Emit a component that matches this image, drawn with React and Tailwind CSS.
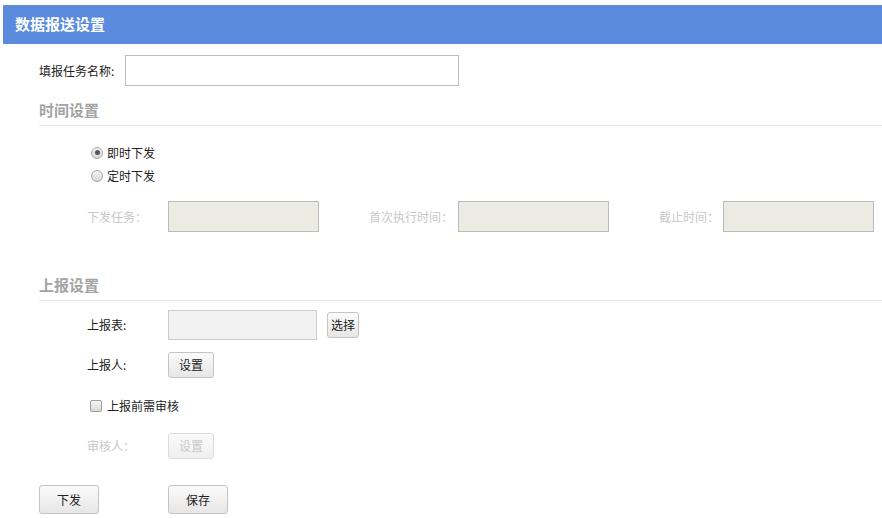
import React from "react"

const font = { fontFamily: '"Noto Sans CJK SC", "Liberation Sans", sans-serif' }

function Btn({ children, className = "", disabled }) {
  return (
    <button
      type="button"
      className={
        "flex items-center justify-center rounded-[3px] border text-[12px] bg-linear-to-b " +
        (disabled
          ? "border-[#dcdcdc] from-[#fafafa] to-[#efefef] text-[#c8c8c8] "
          : "border-[#c4c4c4] from-[#fbfbfb] to-[#e6e6e6] text-[#222] ") +
        className
      }
    >
      {children}
    </button>
  )
}

function Radio({ checked, label }) {
  return (
    <label className="flex h-[23px] items-center gap-[4px] text-[12px] text-[#222]">
      <span className="flex h-[12px] w-[12px] items-center justify-center rounded-full border border-[#a8a8a8] bg-linear-to-b from-[#f4f4f4] to-[#d8d8d8]">
        {checked && <span className="h-[5px] w-[5px] rounded-full bg-[#555]" />}
      </span>
      <span>{label}</span>
    </label>
  )
}

function Section({ title }) {
  return (
    <div className="flex h-[26px] items-start border-b border-[#e8e8e8] text-[15px] font-bold leading-[20px] text-[#a3a3a3]">
      {title}
    </div>
  )
}

export default function App() {
  return (
    <div className="h-[518px] w-[882px] overflow-hidden bg-white pl-[3px] pt-[5px]" style={font}>
      <div className="flex h-[39px] items-center bg-[#5a8bdc] pl-[12px] text-[15px] font-bold text-white">
        数据报送设置
      </div>

      <div className="pl-[36px]">
        <div className="mt-[11px] flex h-[31px] items-center text-[12px] text-[#222]">
          <span className="w-[86px]">填报任务名称:</span>
          <div className="h-[31px] w-[334px] border border-[#bcbcbc] bg-white" />
        </div>

        <div className="mt-[14px]">
          <Section title="时间设置" />
        </div>

        <div className="mt-[15px] pl-[52px]">
          <Radio checked label="即时下发" />
          <Radio label="定时下发" />
        </div>

        <div className="mt-[14px] flex items-center pl-[48px] text-[12px] text-[#c8c8c8]">
          <span className="w-[81px]">下发任务：</span>
          <div className="h-[31px] w-[151px] border border-[#bcbcbc] bg-[#ebebe4]" />
          <span className="ml-[50px] w-[89px]">首次执行时间：</span>
          <div className="h-[31px] w-[151px] border border-[#bcbcbc] bg-[#ebebe4]" />
          <span className="ml-[50px] w-[64px]">截止时间：</span>
          <div className="h-[31px] w-[151px] border border-[#bcbcbc] bg-[#ebebe4]" />
        </div>

        <div className="mt-[43px]">
          <Section title="上报设置" />
        </div>

        <div className="pl-[48px] text-[12px] text-[#222]">
          <div className="mt-[9px] flex items-center">
            <span className="w-[81px]">上报表:</span>
            <div className="h-[30px] w-[149px] border border-[#cccccc] bg-[#f2f2f2]" />
            <Btn className="ml-[10px] h-[26px] w-[32px]">选择</Btn>
          </div>

          <div className="mt-[12px] flex items-center">
            <span className="w-[81px]">上报人:</span>
            <Btn className="h-[26px] w-[46px]">设置</Btn>
          </div>

          <label className="mt-[19px] flex h-[18px] items-center gap-[5px] pl-[3px]">
            <span className="h-[12px] w-[12px] rounded-[2px] border border-[#9c9c9c] bg-linear-to-b from-[#f6f6f6] to-[#dadada]" />
            <span>上报前需审核</span>
          </label>

          <div className="mt-[18px] flex items-center">
            <span className="w-[81px] text-[#c8c8c8]">审核人：</span>
            <Btn disabled className="h-[26px] w-[46px]">设置</Btn>
          </div>
        </div>

        <div className="mt-[26px] flex items-center">
          <Btn className="h-[29px] w-[60px]">下发</Btn>
          <Btn className="ml-[69px] h-[29px] w-[60px]">保存</Btn>
        </div>
      </div>
    </div>
  )
}
